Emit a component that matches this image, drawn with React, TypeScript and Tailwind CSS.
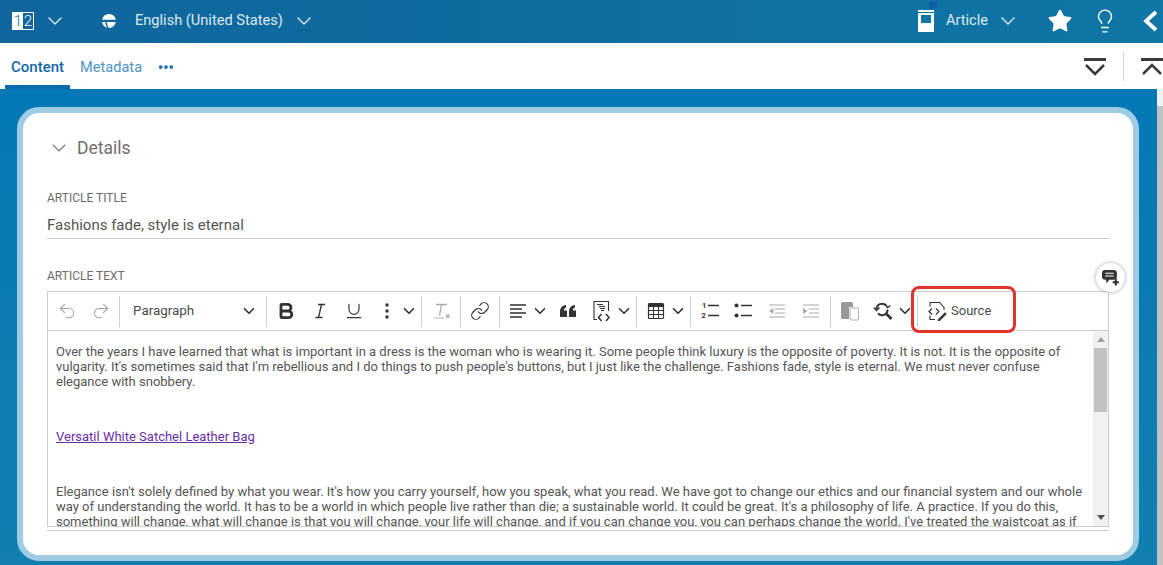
import { ChevronDown, Star, Lightbulb, MoreHorizontal, Undo2, Redo2, Bold, Underline, Link } from 'lucide-react'

const TEXT_1 = "Over the years I have learned that what is important in a dress is the woman who is wearing it. Some people think luxury is the opposite of poverty. It is not. It is the opposite of vulgarity. It's sometimes said that I'm rebellious and I do things to push people's buttons, but I just like the challenge. Fashions fade, style is eternal. We must never confuse elegance with snobbery."
const TEXT_2 = "Elegance isn't solely defined by what you wear. It's how you carry yourself, how you speak, what you read. We have got to change our ethics and our financial system and our whole way of understanding the world. It has to be a world in which people live rather than die; a sustainable world. It could be great. It's a philosophy of life. A practice. If you do this, something will change, what will change is that you will change, your life will change, and if you can change you, you can perhaps change the world. I've treated the waistcoat as if"

function Sep({ className = '' }: { className?: string }) {
  return <div className={`w-px h-[31px] bg-[#cfcfcf] shrink-0 ${className}`} />
}

function Caret({ className = '' }: { className?: string }) {
  return <ChevronDown size={18} strokeWidth={2.2} className={`text-[#333] shrink-0 ${className}`} />
}

function Toolbar() {
  return (
    <div className="h-[40px] border border-[#cccccc] flex items-center shrink-0 bg-white">
      <Undo2 size={20} strokeWidth={1.3} className="text-[#a5a5a5] shrink-0 ml-[9px]" />
      <Redo2 size={20} strokeWidth={1.3} className="text-[#a5a5a5] shrink-0 ml-[14px]" />
      <Sep className="ml-[8px]" />
      <div className="ml-[13px] w-[125px] flex items-center text-[13.4px] text-[#4a4a4a] shrink-0">
        <span className="flex-1">Paragraph</span>
        <Caret />
      </div>
      <Sep className="ml-[8px]" />
      <Bold size={20} strokeWidth={3.4} className="text-[#333] shrink-0 ml-[9px]" />
      <svg width="20" height="20" viewBox="0 0 20 20" fill="none" className="stroke-[#333] shrink-0 ml-[14px]">
        <path d="M8 3.500h7M5.500 16.500h7M11.500 3.500l-3 13" strokeWidth="1.300" />
      </svg>
      <Underline size={20} strokeWidth={1.4} className="text-[#333] shrink-0 ml-[14px]" />
      <svg width="4" height="16" viewBox="0 0 4 16" className="ml-[21px] fill-[#333] shrink-0">
        <circle cx="2" cy="2" r="1.7" /><circle cx="2" cy="8" r="1.7" /><circle cx="2" cy="14" r="1.7" />
      </svg>
      <Caret className="ml-[11px]" />
      <Sep className="ml-[3px]" />
      <svg width="20" height="20" viewBox="0 0 20 20" fill="none" className="ml-[10px] stroke-[#aaa] shrink-0">
        <path d="M4 3.500h11M9.500 3.500l-2 11" strokeWidth="1.300" /><path d="M2 17h10" strokeWidth="1" /><path d="M14 13.500l3.500 3.500M17.500 13.500L14 17" strokeWidth="1.400" />
      </svg>
      <Sep className="ml-[8px]" />
      <Link size={20} strokeWidth={1.4} className="text-[#333] shrink-0 ml-[9px]" />
      <Sep className="ml-[9px]" />
      <svg width="20" height="20" viewBox="0 0 20 20" fill="none" className="stroke-[#333] shrink-0 ml-[8px]">
        <path d="M2 4h16M2 8h12M2 12h16M2 16h12" strokeWidth="1.300" />
      </svg>
      <Caret className="ml-[3px]" />
      <svg width="18" height="18" viewBox="0 0 18 18" className="fill-[#333] shrink-0 ml-[10px]">
        <path d="M1 15V9.500C1 6 3 3.500 7 3v2.500C5.500 6 4.800 7 4.800 8.500H8V15zM10 15V9.500C10 6 12 3.500 16 3v2.500c-1.500.5-2.200 1.500-2.200 3H17V15z" />
      </svg>
      <svg width="20" height="22" viewBox="0 0 20 22" fill="none" className="ml-[15px] stroke-[#333] shrink-0">
        <path d="M2 15V1.500h14.500V11M2 15v4.500h3" strokeWidth="1.100" />
        <path d="M5 4.500h6M7 6.500h6M8 8.500h5M9 10.500h3" strokeWidth="1" />
        <path d="M9.500 14l-3 3.500 3 3.500M14 14l3 3.500-3 3.500" strokeWidth="1.500" />
      </svg>
      <Caret className="ml-[3px]" />
      <Sep className="ml-[3px]" />
      <svg width="20" height="20" viewBox="0 0 20 20" fill="none" className="stroke-[#333] shrink-0 ml-[9px]">
        <rect x="2.500" y="2.500" width="15" height="15" rx="1" strokeWidth="1.200" />
        <path d="M2.500 4.500h15" strokeWidth="3" />
        <path d="M2.500 9.500h15M2.500 13.500h15M7.500 5v12M12.500 5v12" strokeWidth="1" />
      </svg>
      <Caret className="ml-[3px]" />
      <Sep className="ml-[3px]" />
      <svg width="20" height="20" viewBox="0 0 20 20" className="shrink-0 ml-[9px]">
        <text x="2" y="7" fontSize="7.500" fontWeight="700" fontFamily="Roboto, sans-serif" fill="#333">1</text>
        <text x="1.500" y="17" fontSize="7.500" fontWeight="700" fontFamily="Roboto, sans-serif" fill="#333">2</text>
        <path d="M8 4.500h11M8 14.500h11" stroke="#333" strokeWidth="1.300" />
      </svg>
      <svg width="20" height="20" viewBox="0 0 20 20" className="shrink-0 ml-[13px]">
        <circle cx="3.500" cy="4.500" r="2" fill="#333" /><circle cx="3.500" cy="14.500" r="2" fill="#333" />
        <path d="M8 4.500h11M8 14.500h11" stroke="#333" strokeWidth="1.300" />
      </svg>
      <svg width="18" height="14" viewBox="0 0 18 14" fill="none" className="shrink-0 ml-[15px] stroke-[#aaa]">
        <path d="M1 1h16M7 5h10M7 9h10M1 13h16" strokeWidth="1.200" /><path d="M5.500 4v6L1 7z" fill="#aaa" strokeWidth="0" />
      </svg>
      <svg width="18" height="14" viewBox="0 0 18 14" fill="none" className="shrink-0 ml-[16px] stroke-[#aaa]">
        <path d="M1 1h16M7 5h10M7 9h10M1 13h16" strokeWidth="1.200" /><path d="M1 4v6L5.500 7z" fill="#aaa" strokeWidth="0" />
      </svg>
      <Sep className="ml-[10px]" />
      <svg width="20" height="20" viewBox="0 0 20 20" className="shrink-0 ml-[9px]">
        <path d="M1 2.500A1.500 1.500 0 0 1 2.500 1h9A1.500 1.500 0 0 1 13 2.500V6H9v12H2.500A1.500 1.500 0 0 1 1 16.500z" fill="#999" />
        <rect x="10" y="7" width="8.500" height="12" rx="1" fill="#fff" stroke="#aaa" strokeWidth="1" />
      </svg>
      <svg width="20" height="20" viewBox="0 0 20 20" fill="none" className="shrink-0 ml-[13px] stroke-[#333]">
        <path d="M3.500 8.500A5.500 5.500 0 0 1 13 4.500M14.500 8.500a5.500 5.500 0 0 1-9.500 4" strokeWidth="2" />
        <path d="M0.800 6.500l2.700 3 3-3M12 3l2.500 3.500 3-2" strokeWidth="1.500" />
        <path d="M13 12.500l5.500 5.500" strokeWidth="2.800" />
      </svg>
      <Caret className="ml-[3px]" />
      <Sep className="ml-[3px]" />
      <svg width="20" height="20" viewBox="0 0 20 20" fill="none" className="shrink-0 ml-[9px] stroke-[#333]">
        <path d="M3 5.500V1.500h9.500l4.500 5v2.500" strokeWidth="1.100" />
        <path d="M3 14.500v4h5" strokeWidth="1.100" />
        <path d="M5 7.500l-3 3 3 3M9 7.500l3 3-3 3" strokeWidth="1.200" />
        <path d="M11 18.500l7-7 1.500 1.500-7 7H11z" fill="#333" strokeWidth="0.500" />
      </svg>
      <span className="ml-[4px] text-[13px] text-[#4a4a4a]">Source</span>
    </div>
  )
}

export default function App() {
  return (
    <div className="w-[1163px] h-[565px] overflow-hidden flex flex-col font-['Roboto',sans-serif] relative bg-white">
      {/* top bar */}
      <header className="h-[43px] shrink-0 bg-gradient-to-r from-[#0f659c] to-[#0f76a5] flex items-center text-white pr-[5px] pb-[2px]">
        <div className="ml-[12px] flex h-[18px] w-[22px] border border-white text-[15px] leading-[16px] text-center shrink-0 font-light">
          <span className="w-[10px] bg-white text-[#0f659c]">1</span>
          <span className="flex-1">2</span>
        </div>
        <ChevronDown size={24} strokeWidth={1.4} className="ml-[9px] text-[#dceaf2] shrink-0" />
        <svg width="16" height="16" viewBox="0 0 16 16" className="ml-[34px] fill-white shrink-0">
          <path d="M8 1a7 7 0 0 1 6.800 5.800H1.200A7 7 0 0 1 8 1zM1.200 9h3c.2 2 1 4 2 5.800A7 7 0 0 1 1.200 9zM5.800 9h9a7 7 0 0 1-6.800 6c-1-1-2-3.500-2.200-6z" />
        </svg>
        <span className="ml-[18px] text-[14.6px] text-[#dceaf2]">English (United States)</span>
        <ChevronDown size={24} strokeWidth={1.4} className="ml-[9px] text-[#dceaf2] shrink-0" />
        <div className="flex-1" />
        <svg width="16" height="22" viewBox="0 0 16 22" className="fill-white shrink-0">
          <path d="M0 0h16v2H0zM0 3h16v19H0z" />
          <path d="M3 5h10v8H3z" fill="#0f76a5" />
        </svg>
        <span className="ml-[12px] text-[14.6px] text-[#dceaf2]">Article</span>
        <ChevronDown size={24} strokeWidth={1.4} className="ml-[8px] text-[#dceaf2] shrink-0" />
        <Star size={26} fill="white" strokeWidth={1} className="ml-[27px] shrink-0" />
        <Lightbulb size={26} strokeWidth={1.3} className="ml-[19px] shrink-0" />
        <svg width="16" height="22" viewBox="0 0 16 22" fill="none" className="ml-[24px] stroke-white shrink-0">
          <path d="M14 2L4 11l10 9" strokeWidth="3.800" />
        </svg>
      </header>
      <div className="absolute left-[929px] top-[1px] w-[8px] h-[8px] rounded-full bg-[#0f5fae]" />

      {/* tabs */}
      <nav className="h-[46px] shrink-0 bg-white flex items-stretch text-[15px]">
        <div className="ml-[5px] w-[65px] border-b-[4px] border-[#0a6cad] pt-[15px] text-center font-medium text-[#1268a6] leading-[18px]">Content</div>
        <div className="ml-[10px] pt-[15px] text-[14.6px] text-[#4f94c4] leading-[18px]">Metadata</div>
        <MoreHorizontal size={18} strokeWidth={3} className="ml-[15px] mt-[15px] text-[#1268a6] shrink-0" />
        <div className="flex-1" />
        <svg width="24" height="24" viewBox="0 0 24 24" fill="none" className="mt-[14px] stroke-[#3a3a3a] shrink-0">
          <path d="M1 2.500h22" strokeWidth="3" /><path d="M3 8l9 9 9-9" strokeWidth="2.500" />
        </svg>
        <div className="ml-[16px] mt-[8px] w-px h-[30px] bg-[#d5d5d5] shrink-0" />
        <svg width="24" height="24" viewBox="0 0 24 24" fill="none" className="ml-[16px] -mr-[1px] mt-[14px] stroke-[#3a3a3a] shrink-0">
          <path d="M1 2.500h24" strokeWidth="3" /><path d="M3 17l9-9 9 9" strokeWidth="2.500" />
        </svg>
      </nav>

      {/* body */}
      <div className="flex-1 min-h-0 flex">
        <main className="flex-1 min-w-0 bg-gradient-to-b from-[#0378b5] to-[#127fb0] pl-[17px] pr-[18px] pt-[18px]">
          <section className="relative h-[454px] rounded-[22px] border-[6px] border-[#9dcce3] bg-white px-[24px] flex flex-col">
            <div className="mt-[23px] flex items-center h-[24px] text-[17.5px] text-[#6f6f6f]">
              <ChevronDown size={24} strokeWidth={1.1} className="text-[#777] shrink-0" />
              <span className="ml-[6px]">Details</span>
            </div>
            <div className="mt-[31px] text-[12px] leading-[14px] text-[#6b6b6b]">ARTICLE TITLE</div>
            <div className="mt-[11px] h-[23px] border-b border-[#cccccc] text-[15px] text-[#555] leading-[19px]">Fashions fade, style is eternal</div>
            <div className="mt-[30px] text-[12px] leading-[14px] text-[#6b6b6b]">ARTICLE TEXT</div>
            <div className="mt-[8px] flex flex-col">
              <Toolbar />
              <div className="h-[195px] border-x border-[#cccccc] flex overflow-hidden">
                <div className="flex-1 min-w-0 pl-[8px] pr-[9px] pt-[13px] text-[13px] leading-[15px] text-[#555]">
                  <p>{TEXT_1}</p>
                  <p className="mt-[40px]"><a className="text-[#6a2ea6] underline">Versatil White Satchel Leather Bag</a></p>
                  <p className="mt-[40px]">{TEXT_2}</p>
                </div>
                <div className="w-[15px] shrink-0 bg-[#f1f1f1] flex flex-col items-center">
                  <div className="h-[17px] flex items-center"><div className="border-x-[4px] border-b-[5px] border-x-transparent border-b-[#a3a3a3]" /></div>
                  <div className="w-[13px] h-[64px] bg-[#c1c1c1]" />
                  <div className="flex-1" />
                  <div className="h-[17px] flex items-center"><div className="border-x-[4px] border-t-[5px] border-x-transparent border-t-[#505050]" /></div>
                </div>
              </div>
              <div className="h-[5px] border-y border-[#cccccc]" />
            </div>
            <button className="absolute right-[8px] top-[150px] w-[29px] h-[29px] rounded-full bg-white shadow-[0_0_4px_rgba(0,0,0,0.35)] flex items-center justify-center">
              <svg width="17" height="17" viewBox="0 0 16 16">
                <path d="M3 1h8a3 3 0 0 1 3 3v3a3 3 0 0 1-3 3H7l-3 3.500V10H3a3 3 0 0 1-3-3V4a3 3 0 0 1 3-3z" fill="#333" />
                <path d="M3 4h8M3 6.500h8" stroke="#fff" strokeWidth="1" />
                <path d="M10 12.500h6M13 9.500v6" stroke="#333" strokeWidth="2" />
              </svg>
            </button>
          </section>
        </main>
        <div className="w-[6px] shrink-0 bg-[#f1f1f1] flex flex-col">
          <div className="h-[17px]" />
          <div className="h-[459px] bg-[#c1c1c1]" />
        </div>
      </div>

      {/* red callout on Source button */}
      <div className="absolute left-[911px] top-[286px] w-[105px] h-[47px] border-[3px] border-[#e0332b] rounded-[8px]" />
    </div>
  )
}
